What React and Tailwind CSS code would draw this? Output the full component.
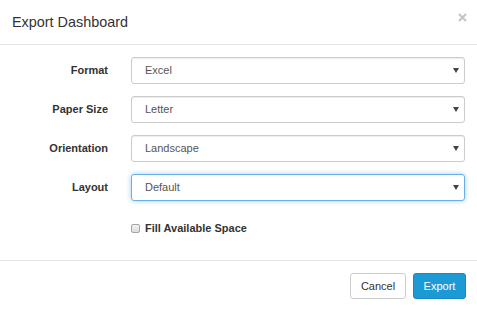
export default function App() {
  const rows = [
    { label: "Format", value: "Excel" },
    { label: "Paper Size", value: "Letter" },
    { label: "Orientation", value: "Landscape" },
    { label: "Layout", value: "Default", focus: true },
  ];

  return (
    <div className="w-[477px] h-[310px] bg-white overflow-hidden text-[#333] font-['Liberation_Sans',Arial,sans-serif]">
      {/* header */}
      <div className="h-[45px] flex items-center justify-between border-b border-[#e5e5e5] pl-[12px] pr-[10px]">
        <h4 className="text-[14.4px] leading-none">Export Dashboard</h4>
        <svg width="9" height="9" viewBox="0 0 9 9" className="-mt-[9px]">
          <path d="M1 1 L8 8 M8 1 L1 8" stroke="#c6c6c6" strokeWidth="2.2" />
        </svg>
      </div>

      {/* body */}
      <div className="h-[215px] px-[12px] pt-[12px] flex flex-col gap-[12px]">
        {rows.map((r) => (
          <div key={r.label} className="flex items-center">
            <label className="w-[96px] text-right font-bold text-[11px]">
              {r.label}
            </label>
            <div
              className={
                r.focus
                  ? "relative ml-[23px] flex-1 h-[27px] flex items-center px-[13px] rounded-[3px] border border-[#66afe9] shadow-[0_0_5px_rgba(102,175,233,0.6)] text-[11px] text-[#555]"
                  : "relative ml-[23px] flex-1 h-[27px] flex items-center px-[13px] rounded-[3px] border border-[#ccc] shadow-[inset_0_1px_1px_rgba(0,0,0,0.075)] text-[11px] text-[#555]"
              }
            >
              {r.value}
              <svg
                width="6"
                height="5"
                viewBox="0 0 6 5"
                className="absolute right-[5px] top-[10px]"
              >
                <polygon points="0,0 6,0 3,5" fill="#444" />
              </svg>
            </div>
          </div>
        ))}
        <div className="flex items-center h-[16px] mt-[7px] pl-[119px]">
          <span className="w-[9px] h-[9px] rounded-[2px] border border-[#a6a6a6] bg-gradient-to-b from-[#f4f4f4] to-[#dcdcdc]" />
          <span className="ml-[5px] font-bold text-[11px]">Fill Available Space</span>
        </div>
      </div>

      {/* footer */}
      <div className="border-t border-[#e5e5e5] pt-[12px] pr-[11px] flex justify-end gap-[7px]">
        <button className="h-[26px] w-[56px] rounded-[3px] border border-[#ccc] bg-white text-[11px] text-[#333]">
          Cancel
        </button>
        <button className="h-[26px] w-[53px] rounded-[3px] border border-[#1889c0] bg-[#1b9ad6] text-[11px] text-white">
          Export
        </button>
      </div>
    </div>
  );
}
